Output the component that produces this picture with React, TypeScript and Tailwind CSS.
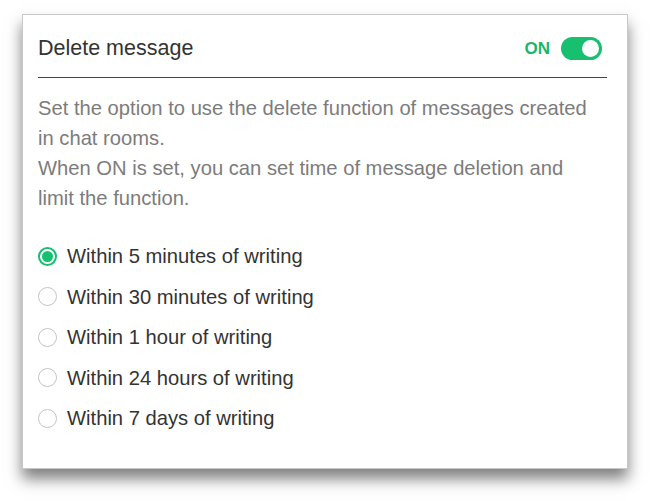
import React, { useState } from "react";

const options = [
  "Within 5 minutes of writing",
  "Within 30 minutes of writing",
  "Within 1 hour of writing",
  "Within 24 hours of writing",
  "Within 7 days of writing",
];

const App = () => {
  const [enabled, setEnabled] = useState(true);
  const [selected, setSelected] = useState(0);

  return (
    <div className="min-h-screen bg-white pl-[22px] pt-[14px] font-[family-name:'Liberation_Sans',Arial,sans-serif]">
      <div className="w-[606px] h-[455px] bg-white border border-[#c8c8c8] shadow-[0_10px_14px_rgba(0,0,0,0.5)] pl-[15px] pr-[20px]">
        <div className="flex items-center justify-between h-[63px] pt-[5px] border-b border-[#444]">
          <h2 className="text-[21.5px] text-[#333]">Delete message</h2>
          <div className="flex items-center gap-[11px] pr-[5px]">
            <span className="text-[17px] font-bold text-[#16b86a]">
              {enabled ? "ON" : "OFF"}
            </span>
            <button
              onClick={() => setEnabled(!enabled)}
              className={`w-[41px] h-[23px] rounded-full flex items-center px-[3px] ${
                enabled ? "bg-[#16c06e] justify-end" : "bg-gray-300 justify-start"
              }`}
            >
              <span className="w-[17px] h-[17px] rounded-full bg-white" />
            </button>
          </div>
        </div>

        <p className="mt-[15px] w-[560px] text-[20.2px] leading-[30px] text-[#7c7c7c]">
          Set the option to use the delete function of messages created in chat rooms.
          <br />
          When ON is set, you can set time of message deletion and limit the function.
        </p>

        <ul className="mt-[28px] flex flex-col gap-[10px]">
          {options.map((label, i) => (
            <li
              key={label}
              onClick={() => setSelected(i)}
              className="flex items-center gap-[10px] h-[30.5px] cursor-pointer"
            >
              {selected === i ? (
                <span className="w-[19px] h-[19px] rounded-full border-2 border-[#16c06e] flex items-center justify-center">
                  <span className="w-[11px] h-[11px] rounded-full bg-[#16c06e]" />
                </span>
              ) : (
                <span className="w-[19px] h-[19px] rounded-full border border-[#c4c4c4]" />
              )}
              <span className="text-[20.2px] text-[#333]">{label}</span>
            </li>
          ))}
        </ul>
      </div>
    </div>
  );
};

export default App;
